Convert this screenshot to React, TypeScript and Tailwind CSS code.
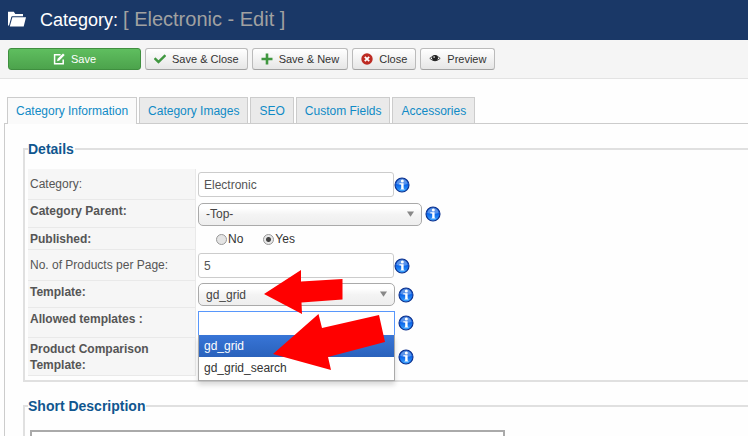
import React, { useState } from "react";
import { FaCheck } from "react-icons/fa";

function FolderIcon() {
  return (
    <svg viewBox="0 0 18 16" className="h-4 w-[18px]" fill="#fff" aria-hidden="true">
      <path d="M0 14.500V.8H5.800L7.300 3H15V5.200H4.200Q3.500 5.200 3.300 5.900L1 14.500Z" />
      <path d="M4.400 6.200H18L15.700 15.600H1.800Z" />
    </svg>
  );
}

function EditIcon() {
  return (
    <svg viewBox="0 0 12 12" className="h-3 w-3" aria-hidden="true">
      <path d="M7.600 1.800H1.600V10.800H10.200V6.500" fill="none" stroke="#fff" strokeWidth="1.500" />
      <path d="M10 .4L11.700 2.100 6.400 7.600 4 8.200 4.600 5.800Z" fill="#fff" />
    </svg>
  );
}

function PlusIcon() {
  return (
    <svg viewBox="0 0 12 12" className="h-3 w-3" aria-hidden="true">
      <path d="M6 .5V11.500M.5 6H11.500" stroke="#409740" strokeWidth="2.600" />
    </svg>
  );
}

function CancelIcon() {
  return (
    <svg viewBox="0 0 12 12" className="h-3 w-3" aria-hidden="true">
      <circle cx="6" cy="6" r="5.700" fill="#bd2a22" />
      <path d="M3.800 3.800L8.200 8.200M8.200 3.800L3.800 8.200" stroke="#fff" strokeWidth="1.800" />
    </svg>
  );
}

function EyeIcon() {
  return (
    <svg viewBox="0 0 12 12" className="h-3 w-3" aria-hidden="true">
      <path d="M.8 5.400Q6 .2 11.200 5.400Q6 10.200.8 5.400Z" fill="#fff" stroke="#444" strokeWidth="1" />
      <circle cx="6" cy="5.100" r="3" fill="#222" />
      <circle cx="5.100" cy="4.100" r=".8" fill="#fff" />
    </svg>
  );
}

function InfoIcon() {
  return (
    <svg viewBox="0 0 16 16" className="h-4 w-4 shrink-0" role="img" aria-label="Info">
      <defs>
        <linearGradient id="info" x1="0" y1="0" x2="0" y2="1">
          <stop offset="0" stopColor="#2f6fd0" />
          <stop offset=".45" stopColor="#0660e8" />
          <stop offset="1" stopColor="#3fa8ff" />
        </linearGradient>
      </defs>
      <circle cx="8" cy="8" r="7" fill="url(#info)" stroke="#0c2f8c" strokeWidth="1.100" />
      <path d="M2.400 7A5.700 5.700 0 0 1 13.600 7Q8 8.800 2.400 7Z" fill="#fff" opacity=".3" />
      <circle cx="8.300" cy="4" r="1.500" fill="#fff" />
      <path d="M5.300 6.300H9.600V11.600L10.800 12.600H6.200L7.200 11.600V7.500L5.300 7.300Z" fill="#fff" />
    </svg>
  );
}

function ToolButton({ icon, children }: { icon: React.ReactNode; children: React.ReactNode }) {
  return (
    <button className="flex h-[22px] items-center gap-[6px] rounded-[3px] border border-[#bbb] border-b-[#a2a2a2] bg-linear-to-b from-white to-[#e6e6e6] px-2 text-[11px] text-[#333]">
      {icon}
      {children}
    </button>
  );
}

const tabs = ["Category Information", "Category Images", "SEO", "Custom Fields", "Accessories"];

function Row({ label, id, bold, height, children }: { label: string; id: string; bold?: boolean; height: string; children: React.ReactNode }) {
  return (
    <tr className={height}>
      <th
        scope="row"
        className={
          "w-[168px] border-r border-b border-[#e9e9e9] bg-[#f6f6f6] pl-[2px] text-left align-top text-[#555] " +
          (bold ? "pt-[3px] font-bold" : "pt-[7px] font-normal")
        }
      >
        <label htmlFor={id} className="block">{label}</label>
      </th>
      <td className="py-0 pl-[2px] align-middle">{children}</td>
    </tr>
  );
}

function TextField({ id, value }: { id: string; value: string }) {
  return (
    <div className="flex items-center">
      <input id={id} defaultValue={value} className="h-[25px] w-[196px] rounded-[3px] border border-[#ccc] bg-white px-[5px] text-[#555] outline-none" />
      <InfoIcon />
    </div>
  );
}

function SelectField({ id, value, width }: { id: string; value: string; width: string }) {
  return (
    <div className="flex items-center gap-[3px]">
      <div className={"relative " + width}>
        <select id={id} className="block h-[23px] w-full appearance-none rounded-[5px] border border-[#aaa] bg-linear-to-b from-white from-20% via-[#f4f4f4] to-[#eee] px-[7px] text-[#444] outline-none">
          <option>{value}</option>
        </select>
        <svg viewBox="0 0 8 6" className="pointer-events-none absolute top-2 right-2 h-[6px] w-[7px]" fill="#888" aria-hidden="true">
          <path d="M0 0H8L4 6Z" />
        </svg>
      </div>
      <InfoIcon />
    </div>
  );
}

function Radio({ label, checked, onChange }: { label: string; checked: boolean; onChange: () => void }) {
  return (
    <label className="flex items-center gap-px text-[#333]">
      <input
        type="radio"
        name="published"
        checked={checked}
        onChange={onChange}
        className="h-[11px] w-[11px] appearance-none rounded-full border border-[#999] bg-[#e4e4e4] checked:bg-[radial-gradient(circle,#444_0,#444_2px,#e8e8e8_3px)]"
      />
      {label}
    </label>
  );
}

function AllowedTemplates() {
  return (
    <div className="flex items-center gap-[3px]">
      <div className="relative w-[197px]">
        <input id="allowed" role="combobox" aria-expanded="true" aria-controls="allowed-list" className="block h-[25px] w-full border border-[#5897fb] bg-white px-[5px] outline-none" />
        <ul id="allowed-list" role="listbox" className="absolute inset-x-0 top-6 z-10 border border-[#aaa] border-t-0 bg-white pb-px text-[#333] shadow-[0_4px_5px_rgba(0,0,0,0.15)]">
          <li role="option" aria-selected="true" className="bg-linear-to-b from-[#3875d7] to-[#2a62bc] px-[5px] leading-[22px] text-white">gd_grid</li>
          <li role="option" aria-selected="false" className="px-[5px] leading-[22px]">gd_grid_search</li>
        </ul>
      </div>
      <InfoIcon />
    </div>
  );
}

export default function App() {
  const [published, setPublished] = useState(true);
  return (
    <div className="relative h-screen overflow-hidden bg-[#fefefe] font-['Liberation_Sans',Arial,sans-serif] text-xs leading-4">
      <header className="flex h-10 items-center gap-[14px] bg-[#1a3867] pb-0.5 pl-2">
        <FolderIcon />
        <h1 className="text-[18px] leading-6 text-white">
          Category: <span className="text-[20px] text-[#a1a1a1]">[ Electronic - Edit ]</span>
        </h1>
      </header>

      <div className="flex gap-1 border-b border-[#e3e3e3] bg-[#f5f5f5] px-2 py-2">
        <button className="flex h-[22px] w-[133px] items-center justify-center gap-[6px] rounded-[3px] border border-[#3f8f3f] bg-linear-to-b from-[#5fbe5f] to-[#4ca34c] text-[11px] text-white">
          <EditIcon />
          Save
        </button>
        <ToolButton icon={<FaCheck className="h-3 w-3 text-[#409740]" />}>Save &amp; Close</ToolButton>
        <ToolButton icon={<PlusIcon />}>Save &amp; New</ToolButton>
        <ToolButton icon={<CancelIcon />}>Close</ToolButton>
        <ToolButton icon={<EyeIcon />}>Preview</ToolButton>
      </div>

      <nav className="mt-[18px] flex gap-[2px] pl-[7px]">
        {tabs.map((tab, i) => (
          <a
            key={tab}
            href="#"
            className={
              "relative border border-b-0 border-[#ccc] px-2 pt-[5px] text-[#108ac6] " +
              (i === 0 ? "z-10 -mb-px h-[27px] bg-[#fafafa]" : "h-[26px] bg-[#eaeaea]")
            }
          >
            {tab}
          </a>
        ))}
      </nav>

      <main className="ml-1 border-t border-l border-[#ccc] pl-[18px] pt-[17px]">
        <fieldset className="border-2 border-r-0 border-[#e0e0e0] pb-1 pl-[3px]">
          <legend className="pr-px text-sm leading-4 font-bold text-[#10568f]">Details</legend>
          <table className="mt-3 w-full border-separate border-spacing-0">
            <tbody>
              <Row label="Category:" id="category" height="h-[31px]">
                <TextField id="category" value="Electronic" />
              </Row>
              <Row label="Category Parent:" id="parent" bold height="h-[28px]">
                <SelectField id="parent" value="-Top-" width="w-[224px]" />
              </Row>
              <Row label="Published:" id="published" bold height="h-[22px]">
                <div id="published" role="radiogroup" aria-label="Published" className="flex gap-5 pl-[18px]">
                  <Radio label="No" checked={!published} onChange={() => setPublished(false)} />
                  <Radio label="Yes" checked={published} onChange={() => setPublished(true)} />
                </div>
              </Row>
              <Row label="No. of Products per Page:" id="per-page" height="h-[31px]">
                <TextField id="per-page" value="5" />
              </Row>
              <Row label="Template:" id="template" bold height="h-[27px]">
                <SelectField id="template" value="gd_grid" width="w-[197px]" />
              </Row>
              <Row label="Allowed templates :" id="allowed" bold height="h-[30px]">
                <AllowedTemplates />
              </Row>
              <Row label="Product Comparison Template:" id="comparison" bold height="h-[38px]">
                <div id="comparison" className="flex pl-[200px]">
                  <InfoIcon />
                </div>
              </Row>
            </tbody>
          </table>
        </fieldset>

        <fieldset className="mt-4 border-2 border-r-0 border-[#e0e0e0] pl-[5px]">
          <legend className="-ml-[2px] pr-px text-sm leading-4 font-bold text-[#10568f]">Short Description</legend>
          <textarea aria-label="Short Description" className="mt-4 block h-40 w-[475px] border-2 border-[#aaa] bg-white" />
        </fieldset>
      </main>

      <svg viewBox="0 0 124 104" className="pointer-events-none absolute top-[268px] left-[263px] z-20 h-[104px] w-[124px]" fill="#f00" aria-hidden="true">
        <path d="M1 26L38 2V13.500L79.500 11V31.500L38.500 34.500L39 46Z" />
        <path d="M10 86L55.500 46L59 60L116 47L122 74L65 89L68 102Z" />
      </svg>
    </div>
  );
}
